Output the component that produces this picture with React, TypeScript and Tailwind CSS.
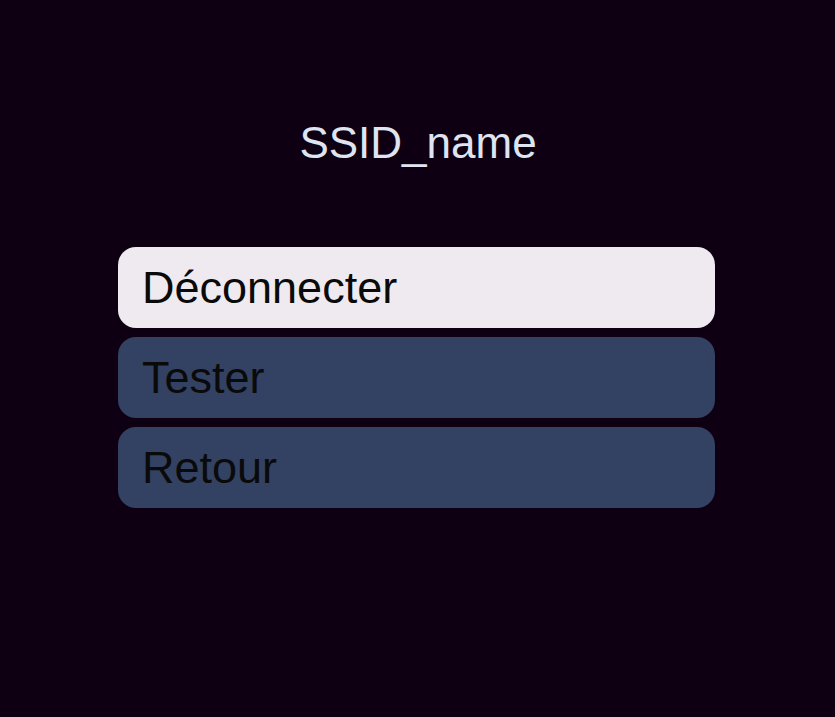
import React from "react";

export default function App() {
  const items = [
    { label: "Déconnecter", active: true },
    { label: "Tester", active: false },
    { label: "Retour", active: false },
  ];
  return (
    <div
      className="w-[835px] h-[717px] bg-[#0e0012] flex flex-col"
      style={{ fontFamily: '"Liberation Sans", Arial, sans-serif' }}
    >
      <div className="mt-[121px] h-[44px] leading-[44px] text-[44px] text-[#dfe4f1] text-center pl-[1px]">
        SSID_name
      </div>
      <div className="mt-[82px] w-[597px] ml-[118px] flex flex-col gap-[9px]">
        {items.map((it) => (
          <div
            key={it.label}
            className={
              "h-[81px] rounded-[18px] flex items-center pl-[24px] text-[45px] leading-none text-[#0a0a0a] " +
              (it.active ? "bg-[#efeaef]" : "bg-[#334162]")
            }
          >
            {it.label}
          </div>
        ))}
      </div>
    </div>
  );
}
